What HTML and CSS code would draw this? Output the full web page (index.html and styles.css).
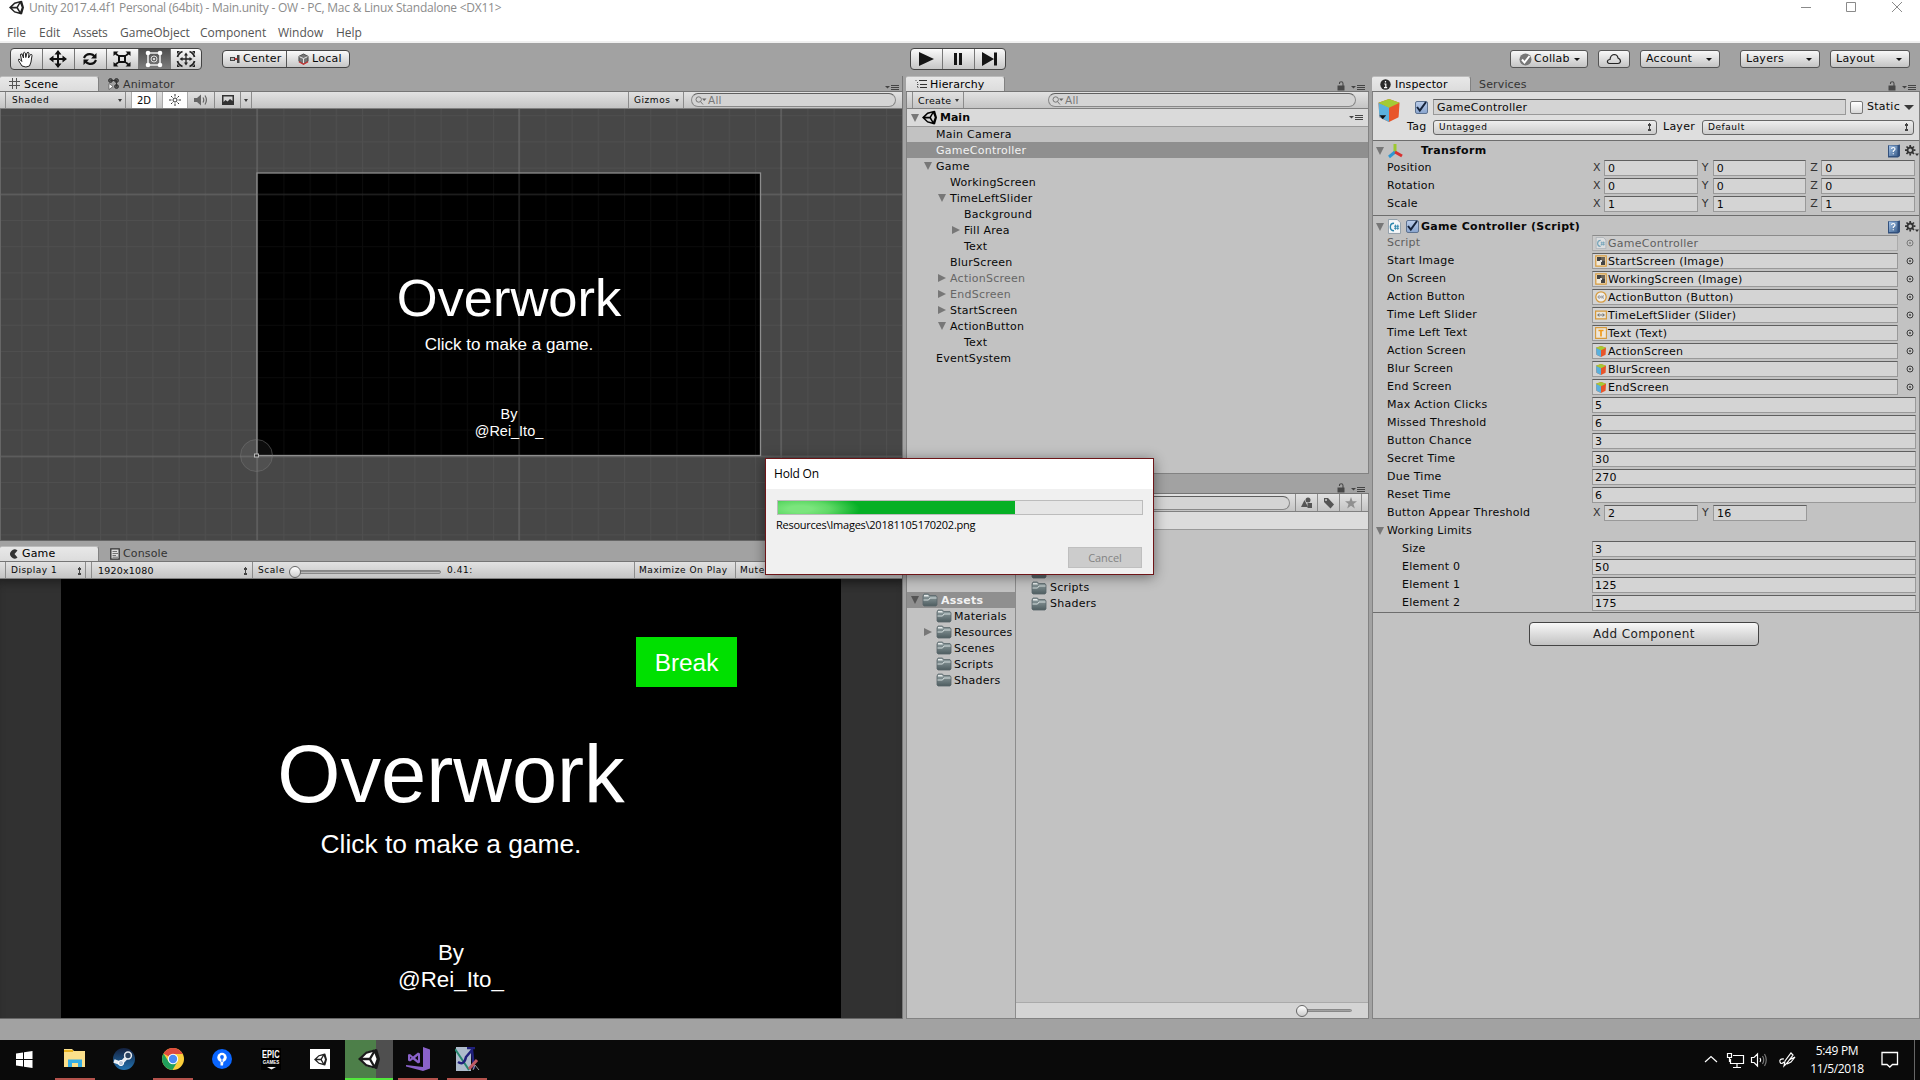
FILE: index.html
```html
<!DOCTYPE html>
<html lang="en">
<head>
<meta charset="utf-8">
<title>Unity 2017.4.4f1 Personal (64bit)</title>
<link rel="stylesheet" href="styles.css">
</head>
<body>
<svg class="defs" width="0" height="0">
  <defs>
    <linearGradient id="fg" x1="0" y1="0" x2="0" y2="1"><stop offset="0" stop-color="#95a3a5"/><stop offset="1" stop-color="#4e5d60"/></linearGradient>
    <linearGradient id="bk" x1="0" y1="0" x2="1" y2="1"><stop offset="0" stop-color="#9fc0e6"/><stop offset="1" stop-color="#3f628f"/></linearGradient>
    <linearGradient id="stm" x1="0" y1="0" x2="0" y2="1"><stop offset="0" stop-color="#14213f"/><stop offset="1" stop-color="#2272b0"/></linearGradient>
    <pattern id="minor" x="21.4" y="6.2" width="26.2" height="26.2" patternUnits="userSpaceOnUse"><path d="M.5 0V26.2M0 .5H26.2" stroke="#fff" stroke-opacity=".045" fill="none"/></pattern>
    <pattern id="major" x="256" y="84.5" width="262" height="262" patternUnits="userSpaceOnUse"><path d="M1 0V262M0 1H262" stroke="#fff" stroke-opacity=".11" stroke-width="1.6" fill="none"/></pattern>
  </defs>
  <symbol id="unity" viewBox="0 0 24 24"><path fill-rule="evenodd" d="M0 12 8.500 4 19.500 1 21 1.500 24 12 21 22.500 19.500 23 8.500 20ZM5 10.600H12.300L16 4.400 9.500 6.200ZM14.400 12 18 18.300 20.300 12 18 5.700ZM5 13.400 9.500 17.800 16 19.600 12.300 13.400Z"/></symbol>
  <symbol id="folder" viewBox="0 0 16 14"><path d="M1 3 2 1H6.500L7.500 2.500H14L15 4V12L14 13H2L1 12Z" fill="url(#fg)" stroke="#59666a" stroke-width=".8"/><path d="M2 2H6L7 3.500H2Z" fill="#e6eaea"/><path d="M1.500 7H6.500L8 5H14.500" stroke="#d5dede" stroke-width="1" fill="none"/></symbol>
  <symbol id="cube" viewBox="0 0 24 24"><path d="M1 4 12 0 23 4 22 19 12 24 2 19Z" fill="#e8552a"/><path d="M1 4 12 8.500V24L2 19Z" fill="#5ab1dd"/><path d="M1 4 12 0 23 4 12 9Z" fill="#a3cb35"/></symbol>
  <symbol id="lens" viewBox="0 0 12 9"><circle cx="3.700" cy="3.500" r="2.700" fill="none" stroke="#777" stroke-width="1"/><path d="M5.500 5.500 8 8.500" stroke="#777"/><path d="M7 2.500H11.500L9.200 5Z" fill="#666"/></symbol>
  <symbol id="pane" viewBox="0 0 14 7"><path d="M0 2H5L2.500 4.500Z" fill="#444"/><path d="M6 1.500H14M6 3.500H14M6 5.500H14" stroke="#444"/></symbol>
  <symbol id="lock" viewBox="0 0 8 10"><path d="M.5 4.500H7.500V9.500H.5Z" fill="#484848"/><path d="M2.500 3V2Q2.500 .8 4.200 .8 6 .8 6 2.500V5" fill="none" stroke="#484848" stroke-width="1.100"/></symbol>
  <symbol id="help" viewBox="0 0 14 14"><path d="M1 2Q1 1 2 1H11L13 .5V12L11 13.500H1Z" fill="#32507c"/><path d="M2 1.500H10.500V12H2Z" fill="url(#bk)"/><path d="M4.600 5Q4.600 3.500 6.200 3.500 8 3.500 8 5 8 6 6.300 7V8M6.300 9.200V10.300" stroke="#fff" stroke-width="1.200" fill="none"/></symbol>
  <symbol id="gear" viewBox="0 0 14 12"><circle cx="5.200" cy="5.200" r="2.700" fill="none" stroke="#333" stroke-width="1.800"/><path d="M5.200 0V2M5.200 8.500V10.400M0 5.200H2M8.500 5.200H10.400M1.500 1.500 3 3M7.400 7.400 9 9M9 1.500 7.400 3M3 7.400 1.500 9" stroke="#333" stroke-width="1.700"/><path d="M10 8.500H14L12 11Z" fill="#333"/></symbol>
  <symbol id="cs" viewBox="0 0 14 16"><path d="M.5.5H10L13.500 4V15.500H.5Z" fill="#f4f6f8" stroke="#8d9aa5"/><path d="M6.500 4.500Q2.500 4.500 2.500 8.500 2.500 12.500 6.500 12.500" stroke="#2c86ad" stroke-width="1.500" fill="none"/><path d="M8 6V11.500M10.500 6V11.500M6.500 7.700H12M6.500 9.900H12" stroke="#2c86ad" stroke-width="1" fill="none"/></symbol>
  <symbol id="img" viewBox="0 0 12 12"><path d="M.8.8H11.200V11.200H.8Z" fill="#f2ead9" stroke="#d69a3c" stroke-width="1.200"/><path d="M2 2H6V6H2ZM6 6H10V10H6Z" fill="#444"/><path d="M6 2H10V6H6Z" fill="#6b6357"/><path d="M5 5H7V7H5Z" fill="#ddd"/></symbol>
  <symbol id="btn" viewBox="0 0 12 12"><circle cx="6" cy="6" r="5.200" fill="#eee" stroke="#d69a3c" stroke-width="1.300"/><circle cx="4.200" cy="6" r="1.200" fill="none" stroke="#777" stroke-width=".8"/><path d="M6.900 4.500V7.500M9 4.500 7.300 6 9 7.500" stroke="#777" stroke-width=".8" fill="none"/></symbol>
  <symbol id="sld" viewBox="0 0 12 12"><path d="M.6 2.100H11.400V9.900H.6Z" fill="#e8e4da" stroke="#d69a3c" stroke-width="1.200"/><path d="M4.500 4 2 6 4.500 8ZM7.500 4 10 6 7.500 8Z" fill="#777"/><circle cx="6" cy="6" r="1" fill="#999"/></symbol>
  <symbol id="txt" viewBox="0 0 12 12"><path d="M.6.6H11.400V11.400H.6Z" fill="#eee6d8" stroke="#d69a3c" stroke-width="1.100"/><path d="M3.500 3.500H8.500M6 3V9.500" stroke="#f09a1a" stroke-width="1.700"/></symbol>
  <symbol id="pick" viewBox="0 0 8 8"><circle cx="4" cy="4" r="3" fill="none" stroke="#3c3c3c"/><circle cx="4" cy="4" r=".9" fill="#3c3c3c"/></symbol>
  <symbol id="check" viewBox="0 0 12 12"><path d="M2 6 4.800 9.500 11 1" fill="none" stroke="#15233a" stroke-width="2"/></symbol>
</svg>

<header class="titlebar">
  <svg class="app-ico" width="15" height="15"><use href="#unity"/></svg>
  <span class="caption">Unity 2017.4.4f1 Personal (64bit) - Main.unity - OW - PC, Mac &amp; Linux Standalone &lt;DX11&gt;</span>
  <svg class="winctl" width="110" height="14" fill="none" stroke="#8a8a8a"><path d="M2 7.500H12M47.500 2.500H56.500V11.500H47.500ZM93 2 103 12M103 2 93 12"/></svg>
</header>
<nav class="menubar"><span class="m1">File</span><span class="m2">Edit</span><span class="m3">Assets</span><span class="m4">GameObject</span><span class="m5">Component</span><span class="m6">Window</span><span>Help</span></nav>

<div class="toolbar">
  <div class="group tools">
    <i><svg width="18" height="17" viewBox="0 0 18 17"><path d="M5 15 1.500 9.500Q1 7.500 3 8.500L4.800 10.500 3.500 4Q3.500 2.500 5 3L6.500 7 6.300 2Q7.300.5 8.300 2L8.800 6.500 10 1.800Q11.300.8 12 2L11.500 7 13.500 3.500Q15 3 15 4.500L14 11 12.500 15Q9 17 5 15Z" fill="#fff" stroke="#222"/></svg></i>
    <i><svg width="18" height="18" viewBox="0 0 18 18"><path d="M9 3V15M3 9H15" stroke="#111" stroke-width="2"/><path d="M9 0 12.500 4.500H5.500ZM9 18 12.500 13.500H5.500ZM0 9 4.500 5.500V12.500ZM18 9 13.500 5.500V12.500Z" fill="#111"/></svg></i>
    <i><svg width="16" height="14" viewBox="0 0 16 14"><path d="M2 6Q4 1.500 8.500 2.200 11 2.500 12.500 4.500M14 8Q12 12.500 7.500 11.800 5 11.500 3.500 9.500" stroke="#111" stroke-width="2.200" fill="none"/><path d="M14.500 1V6.500H9ZM1.500 13V7.500H7Z" fill="#111"/></svg></i>
    <i><svg width="18" height="16" viewBox="0 0 18 16"><path d="M6 5H12V11H6Z" fill="none" stroke="#111" stroke-width="2"/><path d="M2 2 5 4.500M16 2 13 4.500M2 14 5 11.500M16 14 13 11.500" stroke="#111" stroke-width="1.700"/><path d="M.5.5H5.500L.5 5ZM17.500.5H12.500L17.500 5ZM.5 15.500H5.500L.5 11ZM17.500 15.500H12.500L17.500 11Z" fill="#111"/></svg></i>
    <i class="on"><svg width="18" height="18" viewBox="0 0 18 18"><path d="M3 3H15V15H3Z" fill="none" stroke="#eee" stroke-width="1.600"/><circle cx="9" cy="9" r="3" fill="none" stroke="#ddd"/><circle cx="9" cy="9" r="1" fill="#fff"/><g fill="#fff"><circle cx="3" cy="3" r="2.300"/><circle cx="15" cy="3" r="2.300"/><circle cx="3" cy="15" r="2.300"/><circle cx="15" cy="15" r="2.300"/></g></svg></i>
    <i><svg width="20" height="18" viewBox="0 0 20 18"><path d="M10 4V14M5 9H15" stroke="#222" stroke-width="1.300"/><path d="M10 2.500 12 5.500H8ZM10 15.500 12 12.500H8ZM3.500 9 6.500 7V11ZM16.500 9 13.500 7V11Z" fill="#222"/><path d="M1.500 7Q2.500 3 6.500 1.500M13.500 1.500Q17.500 3 18.500 7M1.500 11Q2.500 15 6.500 16.500M13.500 16.500Q17.500 15 18.500 11" stroke="#222" stroke-width="1.800" fill="none"/><path d="M1 1H4L1 4ZM19 1H16L19 4ZM1 17H4L1 14ZM19 17H16L19 14Z" fill="#222"/></svg></i>
  </div>
  <div class="group pivot">
    <b><svg width="10" height="8" viewBox="0 0 10 8"><path d="M0 2H5V6H0ZM7 0H9.500V8H7Z" fill="#444"/><path d="M1 3H4V5H1Z" fill="#bbb"/><path d="M5 4H7" stroke="#c33" stroke-width="2"/></svg>Center</b>
    <b class="local"><svg width="11" height="12" viewBox="0 0 12 13"><path d="M1 3.500 6 1 11 3.500V9L6 12 1 9Z" fill="#777" stroke="#333" stroke-width=".8"/><path d="M1.500 4 6 6 10.500 4M6 6V11" stroke="#eee" fill="none"/><path d="M1 9.500 6 12.300 11 9.500" stroke="#c33" stroke-width="1.300" fill="none"/></svg>Local</b>
  </div>
  <div class="group play">
    <i><svg width="16" height="14"><path d="M1 0 16 7 1 14Z" fill="#151515"/></svg></i>
    <i><svg width="10" height="14"><path d="M1 1H4V13H1ZM6 1H9V13H6Z" fill="#151515"/></svg></i>
    <i><svg width="16" height="14"><path d="M0 0 12 7 0 14ZM12 .5H15V13.500H12Z" fill="#151515"/></svg></i>
  </div>
  <div class="drops">
    <button class="collab"><svg width="13" height="13"><circle cx="6.500" cy="6.500" r="6" fill="#777"/><path d="M3 6.500 5.500 9.500 10.500 3" stroke="#fff" stroke-width="2" fill="none"/></svg><span>Collab</span><u></u></button>
    <button class="cloud"><svg width="16" height="12"><path d="M3.500 10.500Q1 10 1.500 8 2 6.500 4 6.500 4.500 2 8 1.500 11.500 1.500 12 5 14.500 6 14.500 8.500 14 10.500 12 10.500Z" stroke="#222" stroke-width="1.200" fill="none"/></svg></button>
    <button><span>Account</span><u></u></button>
    <button class="layers"><span>Layers</span><u></u></button>
    <button><span>Layout</span><u></u></button>
  </div>
</div>

<main class="workspace">
  <div class="col left">
    <section class="dock scene">
      <div class="tabs">
        <span class="tab on"><svg width="12" height="12"><path d="M3.500 0V11M7.500 0V11M0 3.500H11M0 7.500H11" stroke="#555" fill="none"/></svg>Scene</span>
        <span class="tab"><svg width="12" height="12"><g fill="#555" stroke="#222" stroke-width=".7"><circle cx="2.500" cy="2.500" r="2"/><circle cx="8.500" cy="2.500" r="2"/><circle cx="8.500" cy="8.500" r="2"/></g><path d="M2.500 2.500H8.500V8.500" stroke="#333" fill="none"/><path d="M1 5.500 5 8.500 1 11.500Z" fill="#fff" stroke="#444" stroke-width=".6"/></svg>Animator</span>
        <svg class="pane" width="14" height="7"><use href="#pane"/></svg>
      </div>
      <div class="strip">
        <span class="cell shaded">Shaded<u></u></span>
        <span class="cell lit two">2D</span>
        <span class="cell lit sun"><svg width="12" height="12"><circle cx="6" cy="6" r="2" fill="none" stroke="#333"/><path d="M6 0V2.500M6 9.500V12M0 6H2.500M9.500 6H12M2 2 3.500 3.500M8.500 8.500 10 10M10 2 8.500 3.500M2 10 3.500 8.500" stroke="#333"/></svg></span>
        <span class="cell spk"><svg width="15" height="12"><path d="M1 4H4L8 .5V11.500L4 8H1Z" fill="#666"/><path d="M10 3.500Q11.500 6 10 8.500M12 1.500Q14.800 6 12 10.500" stroke="#666" fill="none" stroke-width="1.200"/></svg></span>
        <span class="cell pic"><svg width="12" height="10"><path d="M0 0H12V10H0Z" fill="#333"/><path d="M1.500 1.500H10.500V6L8 4 5.500 6.500 3.500 5 1.500 7Z" fill="#d5d5d5"/></svg></span>
        <span class="cell pd"><u></u></span>
        <span class="cell giz">Gizmos<u></u></span>
        <span class="search"><svg width="12" height="9"><use href="#lens"/></svg>All</span>
      </div>
      <div class="sceneview">
        <div class="stage small">
          <h1>Overwork</h1><p class="sub">Click to make a game.</p><p class="by">By<br>@Rei_Ito_</p>
        </div>
        <svg class="grid" width="902" height="431">
          <rect width="902" height="431" fill="url(#minor)"/><rect width="902" height="431" fill="url(#major)"/>
          <rect x="257" y="64" width="503.500" height="282.500" fill="none" stroke="#8d8d8d" stroke-width="1.300"/>
          <circle cx="256.500" cy="346.500" r="16" fill="#fff" fill-opacity=".05" stroke="#777" stroke-opacity=".5"/>
          <rect x="254.500" y="345" width="4" height="3" fill="#333" stroke="#bbb"/>
        </svg>
      </div>
    </section>
    <section class="dock game">
      <div class="tabs">
        <span class="tab on"><svg class="pac" width="9" height="10"><path d="M8.500 1.500 5.500 5 8.500 8.500A4.500 4.500 0 1 1 8.500 1.500Z" fill="#333"/></svg>Game</span>
        <span class="tab cons"><svg width="10" height="12"><path d="M.8.8H9.200V11.200H.8Z" fill="#ddd" stroke="#333" stroke-width="1.300"/><path d="M2.500 3.500H7M2.500 5.500H8M2.500 7.500H6M2.500 9.200H8" stroke="#555" stroke-width=".8"/></svg>Console</span>
      </div>
      <div class="strip">
        <span class="cell disp">Display 1<em></em></span>
        <span class="cell res">1920x1080<em></em></span>
        <span class="cell scale">Scale<span class="slider"></span>0.41:</span>
        <span class="cell maxi">Maximize On Play</span>
        <span class="cell mute">Mute Audio</span>
      </div>
      <div class="gameview">
        <div class="stage big">
          <h1>Overwork</h1><p class="sub">Click to make a game.</p><p class="by">By<br>@Rei_Ito_</p>
          <span class="break">Break</span>
        </div>
      </div>
    </section>
  </div>

  <div class="col mid">
    <section class="dock hier">
      <div class="tabs">
        <span class="tab on"><svg width="12" height="10"><path d="M4 1.500H12M5 5.500H12M5 8.500H12" stroke="#333"/><path d="M.5 1.500H2.500M2.500 3V9M2.500 5.500H4M2.500 8.500H4" stroke="#555" stroke-dasharray="1 1"/></svg>Hierarchy</span>
        <svg class="lock" width="8" height="10"><use href="#lock"/></svg><svg class="pane" width="14" height="7"><use href="#pane"/></svg>
      </div>
      <div class="strip">
        <span class="cell create">Create<u></u></span>
        <span class="search"><svg width="12" height="9"><use href="#lens"/></svg>All</span>
      </div>
      <div class="root"><s class="dn"></s><svg width="15" height="15"><use href="#unity"/></svg>Main<svg class="pane" width="14" height="7"><use href="#pane"/></svg></div>
      <ul class="tree">
        <li class="l1">Main Camera</li>
        <li class="l1 sel">GameController</li>
        <li class="l1"><s class="dn"></s>Game</li>
        <li class="l2">WorkingScreen</li>
        <li class="l2"><s class="dn"></s>TimeLeftSlider</li>
        <li class="l3">Background</li>
        <li class="l3"><s></s>Fill Area</li>
        <li class="l3">Text</li>
        <li class="l2">BlurScreen</li>
        <li class="l2 off"><s></s>ActionScreen</li>
        <li class="l2 off"><s></s>EndScreen</li>
        <li class="l2"><s></s>StartScreen</li>
        <li class="l2"><s class="dn"></s>ActionButton</li>
        <li class="l3">Text</li>
        <li class="l1">EventSystem</li>
      </ul>
    </section>
    <section class="dock proj">
      <div class="tabs">
        <svg class="lock" width="8" height="10"><use href="#lock"/></svg><svg class="pane" width="14" height="7"><use href="#pane"/></svg>
      </div>
      <div class="strip">
        <span class="search"></span>
        <span class="cell sq"><svg width="12" height="12"><path d="M3.500 3 7 10H0Z" fill="#555"/><circle cx="7" cy="3" r="2.500" fill="#555"/><path d="M6.500 6H11V11H6.500Z" fill="#555"/></svg></span>
        <span class="cell sq"><svg width="12" height="12"><path d="M1 1H5L11 7.500 7.500 11.500 1 5Z" fill="#555"/><circle cx="3" cy="3" r="1" fill="#ccc"/></svg></span>
        <span class="cell sq"><svg width="12" height="12"><path d="M6 0 7.500 4.200H12L8.500 7 9.800 11.500 6 8.800 2.200 11.500 3.500 7 0 4.200H4.500Z" fill="#909090"/></svg></span>
        <span class="cell end"></span>
      </div>
      <div class="split">
        <ul class="folders">
          <li class="sel"><s class="dn"></s><svg width="16" height="14"><use href="#folder"/></svg>Assets</li>
          <li><svg width="16" height="14"><use href="#folder"/></svg>Materials</li>
          <li><s></s><svg width="16" height="14"><use href="#folder"/></svg>Resources</li>
          <li><svg width="16" height="14"><use href="#folder"/></svg>Scenes</li>
          <li><svg width="16" height="14"><use href="#folder"/></svg>Scripts</li>
          <li><svg width="16" height="14"><use href="#folder"/></svg>Shaders</li>
        </ul>
        <div class="files">
          <div class="crumb"></div>
          <ul>
            <li><svg width="16" height="14"><use href="#folder"/></svg>Scenes</li>
            <li><svg width="16" height="14"><use href="#folder"/></svg>Scripts</li>
            <li><svg width="16" height="14"><use href="#folder"/></svg>Shaders</li>
          </ul>
          <div class="sizebar"><span class="slider"></span></div>
        </div>
      </div>
    </section>
  </div>

  <section class="dock insp">
    <div class="tabs">
      <span class="tab on"><svg width="11" height="11"><circle cx="5.500" cy="5.500" r="5.200" fill="#2b2b2b"/><path d="M5.500 2V3.500M4.300 5H5.800V8.500M4 8.700H7.200" stroke="#fff" stroke-width="1.200" fill="none"/></svg>Inspector</span>
      <span class="tab serv">Services</span>
      <svg class="lock" width="8" height="10"><use href="#lock"/></svg><svg class="pane" width="14" height="7"><use href="#pane"/></svg>
    </div>
    <div class="objhead">
      <svg class="bigcube" width="24" height="23" viewBox="0 0 24 24"><use href="#cube"/><path d="M2 17H9L5.500 21Z" fill="#111"/></svg>
      <div class="objrows">
        <div class="orow"><span class="box on"><svg width="12" height="12"><use href="#check"/></svg></span><span class="field name">GameController</span><span class="box"></span><span class="static">Static</span><u></u></div>
        <div class="orow second"><label class="tag">Tag</label><span class="popup tagp">Untagged<em></em></span><label class="lay">Layer</label><span class="popup layp">Default<em></em></span></div>
      </div>
    </div>
    <div class="comp transform">
      <div class="ctitle"><s class="dn"></s><svg class="cico" width="16" height="16"><path d="M7 9V1" stroke="#9cc82e" stroke-width="3"/><path d="M7 9 1 14" stroke="#2d97d3" stroke-width="3"/><path d="M7 9 14 13" stroke="#d8302f" stroke-width="3"/></svg><span class="nobox"></span>Transform<svg class="help" width="14" height="14"><use href="#help"/></svg><svg width="14" height="12"><use href="#gear"/></svg></div>
      <div class="prop"><label>Position</label><i>X</i><span class="field">0</span><i>Y</i><span class="field">0</span><i>Z</i><span class="field">0</span></div>
      <div class="prop"><label>Rotation</label><i>X</i><span class="field">0</span><i>Y</i><span class="field">0</span><i>Z</i><span class="field">0</span></div>
      <div class="prop"><label>Scale</label><i>X</i><span class="field">1</span><i>Y</i><span class="field">1</span><i>Z</i><span class="field">1</span></div>
    </div>
    <div class="comp script">
      <div class="ctitle"><s class="dn"></s><svg class="cico" width="13" height="15"><use href="#cs"/></svg><span class="box on"><svg width="12" height="12"><use href="#check"/></svg></span>Game Controller (Script)<svg class="help" width="14" height="14"><use href="#help"/></svg><svg width="14" height="12"><use href="#gear"/></svg></div>
      <div class="prop dim"><label>Script</label><span class="field obj"><svg width="12" height="12"><use href="#cs"/></svg>GameController</span><svg width="8" height="8"><use href="#pick"/></svg></div>
      <div class="prop"><label>Start Image</label><span class="field obj"><svg width="12" height="12"><use href="#img"/></svg>StartScreen (Image)</span><svg width="8" height="8"><use href="#pick"/></svg></div>
      <div class="prop"><label>On Screen</label><span class="field obj"><svg width="12" height="12"><use href="#img"/></svg>WorkingScreen (Image)</span><svg width="8" height="8"><use href="#pick"/></svg></div>
      <div class="prop"><label>Action Button</label><span class="field obj"><svg width="12" height="12"><use href="#btn"/></svg>ActionButton (Button)</span><svg width="8" height="8"><use href="#pick"/></svg></div>
      <div class="prop"><label>Time Left Slider</label><span class="field obj"><svg width="12" height="12"><use href="#sld"/></svg>TimeLeftSlider (Slider)</span><svg width="8" height="8"><use href="#pick"/></svg></div>
      <div class="prop"><label>Time Left Text</label><span class="field obj"><svg width="12" height="12"><use href="#txt"/></svg>Text (Text)</span><svg width="8" height="8"><use href="#pick"/></svg></div>
      <div class="prop"><label>Action Screen</label><span class="field obj"><svg width="12" height="11"><use href="#cube"/></svg>ActionScreen</span><svg width="8" height="8"><use href="#pick"/></svg></div>
      <div class="prop"><label>Blur Screen</label><span class="field obj"><svg width="12" height="11"><use href="#cube"/></svg>BlurScreen</span><svg width="8" height="8"><use href="#pick"/></svg></div>
      <div class="prop"><label>End Screen</label><span class="field obj"><svg width="12" height="11"><use href="#cube"/></svg>EndScreen</span><svg width="8" height="8"><use href="#pick"/></svg></div>
      <div class="prop"><label>Max Action Clicks</label><span class="field wide">5</span></div>
      <div class="prop"><label>Missed Threshold</label><span class="field wide">6</span></div>
      <div class="prop"><label>Button Chance</label><span class="field wide">3</span></div>
      <div class="prop"><label>Secret Time</label><span class="field wide">30</span></div>
      <div class="prop"><label>Due Time</label><span class="field wide">270</span></div>
      <div class="prop"><label>Reset Time</label><span class="field wide">6</span></div>
      <div class="prop"><label>Button Appear Threshold</label><i>X</i><span class="field">2</span><i>Y</i><span class="field">16</span></div>
      <div class="prop fold"><s class="dn"></s><label>Working Limits</label></div>
      <div class="prop sub"><label>Size</label><span class="field wide">3</span></div>
      <div class="prop sub"><label>Element 0</label><span class="field wide">50</span></div>
      <div class="prop sub"><label>Element 1</label><span class="field wide">125</span></div>
      <div class="prop sub"><label>Element 2</label><span class="field wide">175</span></div>
    </div>
    <button class="addc">Add Component</button>
  </section>
</main>
<div class="status"></div>

<footer class="taskbar">
  <span class="t start"><svg width="17" height="17"><path d="M0 2.500 7 1.500V8H0ZM8 1.300 16.500 0V8H8ZM0 9H7V15.500L0 14.500ZM8 9H16.500V17L8 15.700Z" fill="#fff"/></svg></span>
  <span class="t run exp"><svg width="22" height="20"><path d="M0 0H8L10 2H21V18H0Z" fill="#fbe08b"/><path d="M0 1H9V3H0Z" fill="#e9b320"/><path d="M4 18V10.500H18V18H14V14H8V18Z" fill="#35aee6"/></svg></span>
  <span class="t"><svg width="22" height="22"><circle cx="11" cy="11" r="11" fill="url(#stm)"/><path d="M1 13 8 15.500 15 8" stroke="#e9edf2" stroke-width="3.500" fill="none"/><circle cx="15" cy="7.500" r="3.400" fill="#28415f" stroke="#e9edf2" stroke-width="1.500"/><circle cx="8" cy="15" r="2.600" fill="#b9c8da" stroke="#fff"/></svg></span>
  <span class="t run"><svg width="22" height="22"><circle cx="11" cy="11" r="11" fill="#fbce3b"/><path d="M11 11 1.500 5.500A11 11 0 0 1 20.500 5.500L20.800 6H11Z" fill="#dd4b3e"/><path d="M1.500 5.500A11 11 0 0 0 10.500 22L15.500 13.500 6.500 13.500Z" fill="#20a05c"/><circle cx="11" cy="11" r="5.200" fill="#fff"/><circle cx="11" cy="11" r="4.200" fill="#4a8bf4"/></svg></span>
  <span class="t"><svg width="20" height="20"><circle cx="10" cy="10" r="10" fill="#0a66ff"/><circle cx="10" cy="8.500" r="4.700" fill="#fff"/><path d="M8.500 12H11.500L11 16.500H8.500Z" fill="#fff"/><circle cx="10" cy="8" r="1.900" fill="#0a66ff"/><path d="M9.500 9H10.500V13H9.500Z" fill="#0a66ff"/></svg></span>
  <span class="t"><span class="epic"><b>EPIC</b><small>GAMES</small><svg width="9" height="3"><path d="M0 0H9L4.500 2.500Z" fill="#eee"/></svg></span></span>
  <span class="t"><span class="hub"><svg width="13" height="13"><use href="#unity"/></svg></span></span>
  <span class="t active"><svg width="22" height="22" viewBox="0 0 24 24"><path d="M1 12 8.500 4.500 19 1.500 23 12 19 22.500 8.500 19.500Z" fill="#fff"/><use href="#unity" fill="#1a1a1a"/></svg></span>
  <span class="t run vs"><svg width="24" height="24"><path d="M17 0 24 2.500V21.500L17 24 0 19.500V18L17 20Z" fill="#8a62c9"/><path d="M2 7.500 4 7 7 9.500 12 5.500 14 6.500V15.500L12 16.500 7 12.500 4 14.500 2 13.500ZM4.200 9.500V12L5.500 10.800ZM9 11 12 13.500V8.500Z" fill="#8a62c9" fill-rule="evenodd"/></svg></span>
  <span class="t run sai"><svg width="25" height="24"><path d="M1 0H16V24H1Z" fill="#aebccc"/><path d="M0 2 14 23" stroke="#25856d" stroke-width="2"/><path d="M3 15Q9 19 11 10L17 3 19 22M12 1H20" stroke="#20207c" stroke-width="2.500" fill="none"/><path d="M14 22 22 13" stroke="#bf5a63" stroke-width="3"/><path d="M18 23 20 18 24 23" stroke="#999" fill="none"/></svg></span>
  <div class="tray">
    <svg class="net" width="98" height="20" fill="none" stroke="#fff" stroke-width="1.200"><path d="M1 12 7 6.500 13 12"/><path d="M29 5.500H39.500V13.500H26.500V9M33 14V17M29 17.500H37"/><path d="M23.500 3.500H27.500V7.500H23.500ZM25.500 7.500V12"/><path d="M47.500 7.500H50L53.500 4V16L50 12.500H47.500ZM56 8Q57.500 10 56 12"/><path d="M58.500 6Q61 10 58.500 14M60.500 4Q64 10 60.500 16" stroke="#777"/><path d="M80 9Q75 8.500 76 12 77 15 80 12M80 16 81 11 87 3 89 5 83 13ZM85 10 91 7 87 12 83 14"/></svg>
    <div class="clock">5:49 PM<br>11/5/2018</div>
    <svg class="note" width="18" height="18"><path d="M1 1.500H16.500V13.500H11.500L8.800 16 6 13.500H1Z" fill="none" stroke="#fff" stroke-width="1.300"/></svg>
  </div>
</footer>

<div class="dialog">
  <div class="dtitle">Hold On</div>
  <div class="dbody">
    <div class="bar"><span style="width:65%"></span></div>
    <div class="msg">Resources\Images\20181105170202.png</div>
    <button class="cancel">Cancel</button>
  </div>
</div>
</body>
</html>
```
FILE: styles.css
```css
* { box-sizing: border-box; margin: 0; padding: 0; }
html, body { width: 1920px; height: 1080px; overflow: hidden; }
body {
  display: flex; flex-direction: column; position: relative;
  background: #a2a2a2; color: #080808;
  font: 11px/16px "DejaVu Sans", Verdana, sans-serif; letter-spacing: .25px;
}
.defs { position: absolute; }
svg { flex: none; display: block; }
ul { list-style: none; }
i, em { font-style: normal; }
u, s { text-decoration: none; flex: none; }
button { font: inherit; letter-spacing: inherit; color: inherit; }

/* small triangles */
u { border: 2.5px solid transparent; border-top: 3.5px solid #3a3a3a; border-bottom: 0; height: 0; width: 0; }
s { width: 0; height: 0; border: 4px solid transparent; border-left: 8px solid #777; border-right: 0; }
s.dn { border: 4px solid transparent; border-top: 8px solid #777; border-bottom: 0; }
em { width: 5px; height: 8px; margin-left: auto; background: linear-gradient(#444,#444) 50% 50%/1px 8px no-repeat, linear-gradient(#444,#444) 50% 1px/3px 2px no-repeat, linear-gradient(#444,#444) 50% 6px/3px 2px no-repeat; }

.titlebar { height: 22px; flex: none; background: #fff; display: flex; padding: 0 11px 0 9px; }
.app-ico { fill: #222; }
.caption { font: 12px/16px "Open Sans", "Noto Sans", sans-serif; letter-spacing: -.24px; color: #8c8c8c; margin-left: 5px; }
.winctl { margin-left: auto; }
.menubar { height: 21px; flex: none; background: #fff; border-bottom: 2px solid #f0f0f0; display: flex; padding-left: 7px; font: 12px/21px "Open Sans", "Noto Sans", sans-serif; letter-spacing: 0; color: #555; }
.m1 { width: 32px; } .m2 { width: 34px; } .m3 { width: 47px; } .m4 { width: 80px; } .m5 { width: 78px; } .m6 { width: 58px; }
.m3 { letter-spacing: -.2px; }

.toolbar { height: 33px; flex: none; display: flex; align-items: flex-start; padding: 5px 10px 0; }
.group { display: flex; border: 1px solid #444; border-radius: 4px; overflow: hidden; background: linear-gradient(#fafafa, #c6c6c6); }
.group i { width: 32px; height: 20px; display: grid; place-items: center; border-left: 1px solid #777; }
.group i:first-child { border-left: 0; width: 31px; }
.group i:last-child { width: 31px; }
.group i.on { background: linear-gradient(#4f4f4f, #7d7d7d); }
.group svg { margin-left: -1px; }
.pivot { margin: 2px 0 0 20px; width: 128px; }
.pivot b { font-weight: normal; height: 16px; line-height: 16px; flex: 0 0 63px; display: flex; align-items: center; gap: 3px; padding-left: 8px; }
.pivot .local { flex: 1; border-left: 1px solid #555; padding-left: 12px; }
.play { margin-left: 560px; }
.drops { margin: 2px 0 0 auto; display: flex; gap: 10px; }
.drops button { width: 80px; height: 18px; border: 1px solid #555; border-radius: 3px; background: linear-gradient(#f8f8f8, #c4c4c4); display: flex; align-items: center; padding: 0 7px 0 5px; line-height: 16px; }
.drops u { margin-left: auto; border-width: 3.5px 3px 0; border-top-color: #111; }
.drops .collab { width: 78px; padding-left: 8px; gap: 2px; }
.drops .cloud { width: 32px; padding: 0 0 0 7px; }
.drops .layers { margin-left: 10px; }

.workspace { height: 942px; flex: none; display: grid; grid-template-columns: 903px 463px 548px; column-gap: 3px; }
.col { display: flex; flex-direction: column; }
.dock { display: flex; flex-direction: column; background: #c2c2c2; }
.mid .dock, .insp { border: 1px solid #828282; border-top: 0; }
.tabs { height: 16px; margin: 0 -1px; flex: none; display: flex; background: #a2a2a2; border-bottom: 1px solid #757575; color: #333; padding-right: 4px; }
.tab { display: flex; align-items: center; gap: 3px; width: 99px; padding: 1px 0 0 9px; line-height: 15px; letter-spacing: .15px; }
.tab.on { background: linear-gradient(#e8e8e8, #dcdcdc); color: #000; border-right: 1px solid #828282; border-top: 1px solid #bbb; border-radius: 2px 3px 0 0; padding-top: 0; }
.tabs .pane { margin: 8px 0 0 4px; }
.tabs .lock { margin: 5px 2px 0 auto; }
.tabs .pane:only-of-type { margin-left: auto; }
.left .tabs { margin: 0; padding-right: 3px; }
.insp .tab.on { padding-left: 8px; gap: 4px; }
.tab.serv { padding-left: 8px; width: 90px; }

.strip { height: 17px; flex: none; display: flex; font-size: 9px; letter-spacing: .55px; line-height: 17px; background: linear-gradient(#e2e2e2, #c4c4c4); border-bottom: 1px solid #808080; }
.cell { display: flex; align-items: center; border-left: 1px solid #8c8c8c; padding-left: 6px; white-space: nowrap; }
.cell u { margin-left: auto; }
.search { height: 14px; margin-top: 1px; border: 1px solid #888; border-top-color: #5f5f5f; border-radius: 7px; background: #d4d4d4; display: flex; align-items: center; padding-left: 3px; gap: 1px; color: #777; font-size: 10.5px; letter-spacing: .2px; line-height: 12px; }
.shaded { margin-left: 5px; width: 121px; border-right: 1px solid #8c8c8c; padding-right: 3px; }
.lit { background: #fff; border: 1px solid #aaa; border-width: 0 1px; justify-content: center; padding: 0; }
.two { margin-left: 5px; width: 26px; font-size: 10px; letter-spacing: 0; }
.sun { margin-left: 5px; width: 26px; }
.spk { width: 26px; border: 0; padding-left: 5px; }
.pic { width: 26px; padding-left: 7px; }
.pd { width: 12px; border-right: 1px solid #8c8c8c; padding: 0 3px 0 0; }
.giz { margin-left: 376px; width: 56px; border-right: 1px solid #8c8c8c; padding: 0 4px 0 5px; }
.scene .search { margin-left: 7px; width: 205px; }

.scene { height: 465px; flex: none; border-bottom: 1px solid #666; background: #474747; border-right: 1px solid #777; }
.sceneview { flex: 1; position: relative; padding: 64px 0 0 256px; border-left: 1px solid #666; overflow: hidden; }
.grid { position: absolute; left: -1px; top: 0; }
.stage { background: #000; color: #fff; font-family: "Liberation Sans", Arial, sans-serif; text-align: center; letter-spacing: 0; overflow: hidden; }
.stage h1 { font-weight: normal; font-size: 2em; line-height: 1; padding-top: 1.89em; }
.stage .sub { font-size: .65em; line-height: 1; margin-top: .645em; }
.stage .by { font-size: .55em; line-height: 1.18; margin-top: 3.7em; }
.small { width: 504px; height: 283px; font-size: 26.25px; }
.big { width: 780px; height: 439px; font-size: 40.6px; position: relative; }
.big h1 { padding-top: 155px; }
.big .sub { margin-top: 16px; }
.break { position: absolute; left: 575px; top: 58px; width: 101px; height: 50px; background: #00e000; font-size: 24.4px; line-height: 51px; }

.game { margin-top: 5px; flex: 1; background: #313131; border-right: 1px solid #777; }
.game .tab { line-height: 16px; }
.game .cell { padding-top: 1px; }
.pac { margin-right: 1px; }
.cons { padding-left: 11px; }
.disp { margin-left: 5px; width: 81px; border-right: 1px solid #8c8c8c; padding: 0 3px 0 5px; }
.disp, .res { letter-spacing: .5px; }
.res { margin-left: 5px; width: 161px; padding: 0 4px 0 6px; font-size: 9.5px; letter-spacing: .2px; }
.scale { width: 382px; padding-left: 5px; }
.slider { height: 4px; border-radius: 2px; background: linear-gradient(#777, #ccc); border: 1px solid #888; display: flex; align-items: center; }
.slider::before { content: ""; width: 10px; height: 10px; flex: none; border-radius: 50%; border: 1px solid #666; background: linear-gradient(#fff, #ccc); margin-left: -2px; }
.scale .slider { width: 151px; margin: 2px 6px 0 5px; }
.maxi { width: 101px; padding-left: 4px; }
.mute { padding-left: 4px; width: 67px; }
.gameview { flex: 1; padding-left: 61px; border-bottom: 1px solid #666; box-shadow: inset 0 8px 8px -4px #222; }

.hier { height: 398px; flex: none; }
.create { margin-left: 5px; width: 52px; padding: 0 4px 0 5px; border-right: 1px solid #8c8c8c; font-size: 9.5px; letter-spacing: .3px; }
.hier .search { margin-left: 84px; width: 308px; }
.root { height: 18px; flex: none; margin-bottom: -1px; display: flex; align-items: center; gap: 3px; font-weight: bold; font-size: 11px; letter-spacing: 0; background: #dadada; border-bottom: 1px solid #999; padding: 0 5px; }
.root s { margin-left: -1px; }
.root .pane { margin-left: auto; }
.tree li { height: 16px; line-height: 17px; display: flex; align-items: center; }
.tree s { width: 8px; margin-left: -12px; margin-right: 4px; }
.l1 { padding-left: 29px; } .l2 { padding-left: 43px; } .l3 { padding-left: 57px; }
.off { color: #666; }
.sel { background: #8f8f8f; color: #f2f2f2; }

.proj { margin-top: 3px; flex: 1; }
.proj .tabs { height: 17px; }
.proj .lock { margin-top: 6px; }
.proj .pane { margin-top: 9px; }
.proj .strip { height: 18px; }
.proj .search { width: 381px; margin-left: 5px; margin-right: 5px; margin-top: 2px; }
.sq { width: 22px; padding-left: 5px; }
.split { flex: 1; display: grid; grid-template-columns: 109px 1fr; }
.folders { padding-top: 80px; border-right: 1px solid #8c8c8c; }
.folders li { height: 16px; line-height: 17px; display: flex; align-items: center; padding-left: 29px; gap: 2px; white-space: nowrap; }
.folders s { margin: 0 2px 0 -12px; width: 8px; }
.folders .sel { font-weight: bold; padding-left: 15px; gap: 3px; }
.folders .sel s { margin: 0 0 0 -11px; border-top-color: #555; }
.files { display: flex; flex-direction: column; }
.crumb { height: 18px; background: #dcdcdc; border-bottom: 1px solid #999; }
.files ul { flex: 1; padding: 33px 0 0 15px; }
.files li { height: 16px; line-height: 17px; display: flex; align-items: center; gap: 3px; padding-top: 1px; }
.sizebar { height: 16px; border-top: 1px solid #aaa; background: #d4d4d4; padding: 6px 0 0 281px; }
.sizebar .slider { width: 55px; height: 3px; }

.insp .field { height: 16px; background: #d4d4d4; border: 1px solid #999; border-top: 1px solid #5f5f5f; line-height: 15px; padding-left: 3px; display: flex; align-items: center; white-space: nowrap; }
.objhead { height: 49px; flex: none; background: #dedede; border-bottom: 1px solid #6d6d6d; display: flex; padding: 7px 0 0 4px; }
.objrows { flex: 1; }
.orow { display: flex; align-items: center; padding-left: 14px; }
.box { width: 13px; height: 13px; flex: none; border: 1px solid #777; border-radius: 2px; background: linear-gradient(#fff, #d8d8d8); }
.box.on { background: linear-gradient(#b8cbe8, #8ba6cf); border-color: #5d7290; }
.box svg { margin: -1px 0 0 -1px; }
.name { width: 413px; margin: 0 4px 0 5px; background: #dadada; }
.static { width: 36px; margin-left: 4px; }
.orow > u { border-width: 5px 5px 0; margin-left: 1px; }
.second { margin-top: 4px; padding-left: 6px; }
.tag { width: 26px; } .lay { width: 39px; margin-left: 6px; }
.popup { height: 15px; border: 1px solid #666; border-radius: 3px; background: linear-gradient(#eee, #ccc); display: flex; align-items: center; font-size: 9px; letter-spacing: .55px; padding: 0 4px 0 5px; }
.tagp { width: 224px; } .layp { width: 212px; }
.comp { border-bottom: 1px solid #6d6d6d; }
.transform { height: 75px; flex: none; } .script { height: 397px; flex: none; }
.ctitle { height: 18px; margin: 1px 0 -1px; display: flex; align-items: center; padding: 0 0 0 3px; font-weight: bold; letter-spacing: .3px; }
.script .ctitle { height: 17px; margin: 2px 0 -1px; }
.cico { margin: 0 3px 0 4px; }
.script .cico { margin: 0 5px 0 4px; }
.ctitle .box { margin-right: 2px; }
.nobox { width: 14px; }
.help { margin: 0 4px 0 auto; }
.prop { height: 18px; display: flex; align-items: center; padding-left: 14px; }
.prop label { width: 205px; flex: none; white-space: nowrap; }
.prop .field { width: 94px; margin-right: 4px; }
.prop i { width: 12px; color: #333; padding-left: 1px; }
.prop i + .field + i { width: 11px; padding-left: 0; }
.prop .field.wide { width: 324px; margin: 0; padding-left: 2px; }
.prop .field.obj { width: 306px; margin: 0 8px 0 0; padding-left: 2px; gap: 1px; }
.dim { opacity: .55; }
.sub label { padding-left: 15px; }
.fold s { margin: 0 3px 0 -11px; }
.addc { width: 230px; height: 24px; margin: 9px 160px 0 auto; flex: none; border: 1px solid #444; border-radius: 4px; background: linear-gradient(#f8f8f8, #c2c2c2); font-size: 12px; letter-spacing: .4px; color: #222; }

.status { height: 22px; flex: none; }
.taskbar { height: 40px; flex: none; background: #0a0a0a; display: flex; color: #fff; padding-right: 5px; }
.t { width: 40px; height: 40px; margin-right: 9px; display: grid; place-items: center; border-bottom: 2px solid transparent; flex: none; }
.start { margin-left: 4px; margin-right: 11px; }
.run { border-bottom-color: #b4524c; }
.active { width: 48px; margin: 0 5px 0 -4px; border-bottom-color: #52e83c; background: linear-gradient(90deg, #4d7f49 65%, #4f4f4f 65%); }
.epic { width: 20px; height: 22px; background: #000; display: flex; flex-direction: column; align-items: center; letter-spacing: 0; }
.epic b { font: bold 11px/12px "Liberation Sans Narrow", "Liberation Sans", sans-serif; transform: scaleX(.68); }
.epic small { font: bold 4.5px/5px "Liberation Sans", sans-serif; margin-bottom: 2px; }
.hub { width: 20px; height: 20px; background: #fff; display: grid; place-items: center; }
.hub svg { fill: #222; }
.tray { margin-left: auto; display: flex; align-items: center; border-right: 1px solid #666; height: 40px; width: 212px; }
.net { margin-left: 1px; }
.clock { width: 62px; margin-left: 4px; font: 12px/18px "Open Sans", "Noto Sans", sans-serif; letter-spacing: -.35px; text-align: center; white-space: nowrap; }
.note { margin-left: 13px; }

.dialog { position: absolute; left: 765px; top: 458px; width: 389px; height: 117px; border: 1px solid #6e1518; background: #f0f0f0; box-shadow: 0 2px 12px rgba(0,0,0,.45); font: 12px/16px "Open Sans", "Noto Sans", sans-serif; color: #000; }
.dtitle { height: 30px; background: #fff; line-height: 30px; padding-left: 8px; letter-spacing: -.2px; }
.dbody { padding: 11px 10px 0 11px; display: flex; flex-direction: column; }
.bar { height: 15px; border: 1px solid #bcbcbc; background: #e6e6e6; display: flex; }
.bar span { background: radial-gradient(ellipse 60px 16px at 22px 8px, #7be57d 20%, #5fd966 50%, transparent 100%), #06b025; }
.msg { font-size: 11px; line-height: 20px; letter-spacing: -.25px; margin-left: -1px; }
.cancel { width: 74px; height: 21px; margin: 12px 1px 0 0; align-self: flex-end; background: #ccc; border: 1px solid #bfbfbf; color: #838383; font-size: 11px; line-height: 18px; letter-spacing: -.1px; }
```
